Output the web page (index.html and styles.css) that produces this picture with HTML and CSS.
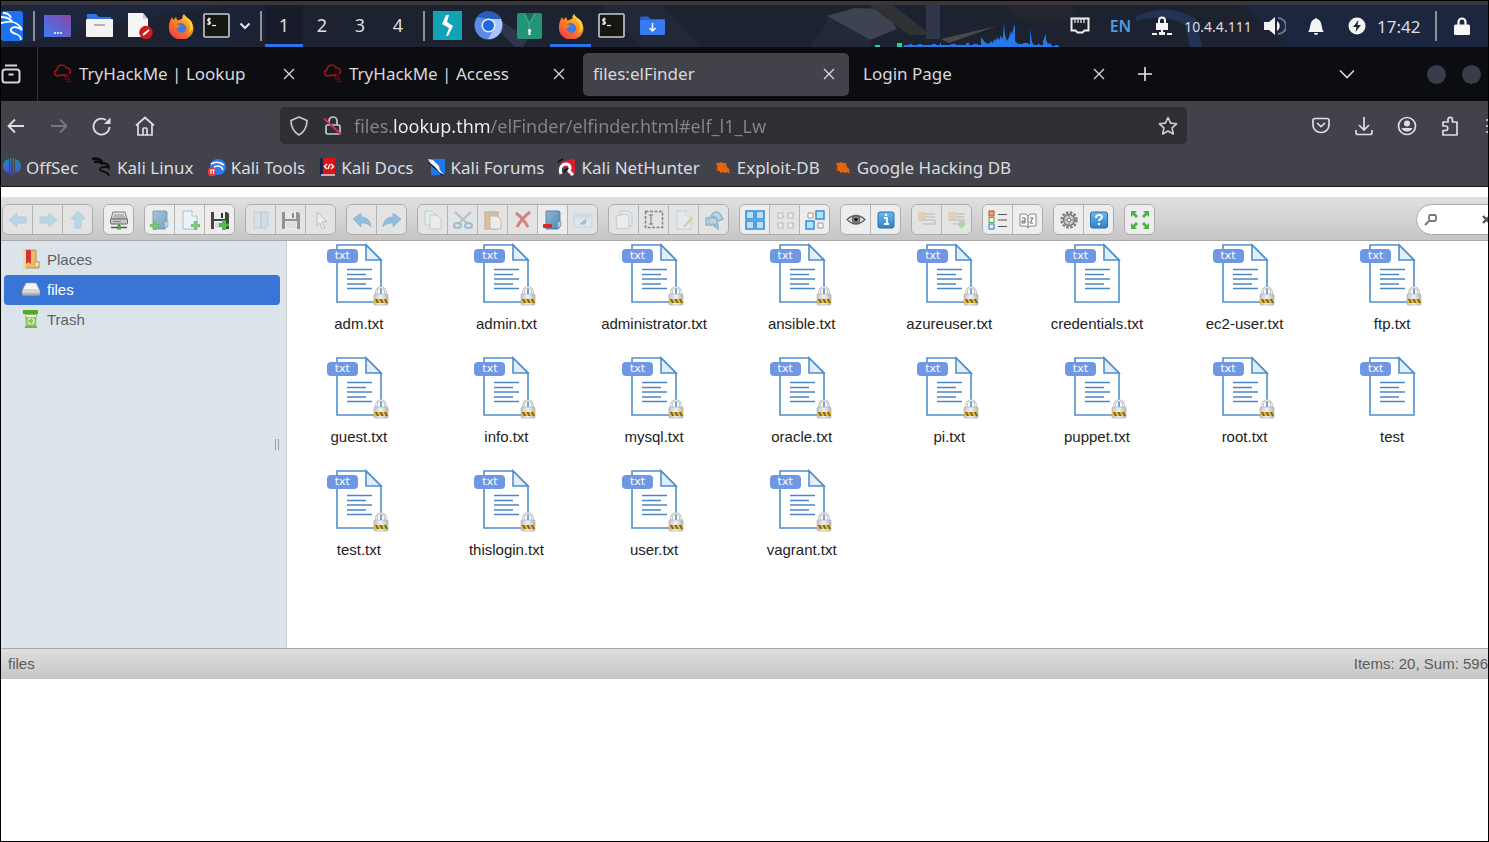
FILE: index.html
```html
<!DOCTYPE html>
<html lang="en">
<head>
<meta charset="utf-8">
<title>files:elFinder</title>
<link rel="stylesheet" href="styles.css">
</head>
<body>
<svg class="sprite" width="0" height="0" aria-hidden="true">
  <defs>
    <linearGradient id="g-purple" x1="0" y1="1" x2="1" y2="0"><stop offset="0" stop-color="#3b7df5"/><stop offset="1" stop-color="#8a45a8"/></linearGradient>
    <linearGradient id="g-fox" x1="0.9" y1="0" x2="0.2" y2="1"><stop offset="0" stop-color="#ffe04a"/><stop offset=".45" stop-color="#ff8a1e"/><stop offset="1" stop-color="#f0364f"/></linearGradient>
    <linearGradient id="g-off" x1="0" y1="0" x2="0" y2="1"><stop offset="0" stop-color="#1795a8"/><stop offset="1" stop-color="#5b3fe0"/></linearGradient>
    <linearGradient id="g-blue" x1="0" y1="0" x2="0" y2="1"><stop offset="0" stop-color="#6db8ee"/><stop offset="1" stop-color="#3180c8"/></linearGradient>
    <linearGradient id="g-folder" x1="0" y1="0" x2="1" y2="1"><stop offset="0" stop-color="#8fb9d6"/><stop offset="1" stop-color="#4f86b0"/></linearGradient>
    <linearGradient id="g-lock" x1="0" y1="0" x2="1" y2="0"><stop offset="0" stop-color="#c4c4c4"/><stop offset=".5" stop-color="#f1f1f1"/><stop offset="1" stop-color="#b5b5b5"/></linearGradient>
    <linearGradient id="g-drive" x1="0" y1="0" x2="0" y2="1"><stop offset="0" stop-color="#f5f5f5"/><stop offset="1" stop-color="#9a9a9a"/></linearGradient>
  </defs>
  <symbol id="firefox" viewBox="0 0 26 26">
    <path fill="url(#g-fox)" d="M16 1c1 3 3 4 5 6 3 3 4.500 6 4.500 9A12 11 0 0 1 1 15C.6 11 2 8 3 6l1-2 1.500 3L8 4l1.500 3.500C11.500 7 13 6 14.500 5.500 14 4 15 2 16 1z"/>
    <path fill="#3f7be0" d="M8 12c2-3 9-3 10 2s-4 7-7 5-4-4-3-7z"/><path fill="#ff7526" d="M6 11c3 0 6 1 7 2-2 1-4 1-4 3-3-1-4-3-3-5z"/><path fill="#ffd23e" d="M16 1c0 4 5 7 6 11 1 3-1 7-3 9 6-3 7-9 4-13-2-3-5-3-7-7z"/>
  </symbol>
  <symbol id="terminal" viewBox="0 0 27 25"><rect x="1" y="1" width="25" height="23" rx="1" fill="#151713" stroke="#c7c9cc" stroke-width="1.600"/><path d="M8 6H5.500c-1 0-1 2 0 2.200l1 .3c1.200.4 1.200 2.300 0 2.500H4M6 4.500V12" fill="none" stroke="#fff" stroke-width="1.100"/><path d="M9 12.500h4" stroke="#fff" stroke-width="1.200"/></symbol>
  <symbol id="folder-plus" viewBox="0 0 20 20"><path d="M3 1h13l1 1v15l-2 2H3z" fill="url(#g-folder)" stroke="#41749c" stroke-width=".8"/><path d="M14.500 18.500v-7H18v4.500z" fill="#a9c9e0" stroke="#5a8bb0" stroke-width=".6"/></symbol>
  <symbol id="plus" viewBox="0 0 8 8"><path d="M3 0h2v3h3v2H5v3H3V5H0V3h3z" fill="#56c646" stroke="#2f9634" stroke-width=".6"/></symbol>
  <symbol id="floppy" viewBox="0 0 20 20"><path d="M1 2h16l2 2v15H1z" fill="#444"/><path d="M4 2h11v7H4z" fill="#eee"/><path d="M11 3h2v5h-2z" fill="#333"/><path d="M4 11h12v8H4z" fill="#f4f4f4"/><path d="M5 13h10M5 15h10M5 17h10" stroke="#aaa" stroke-width=".7"/></symbol>
  <symbol id="page" viewBox="0 0 20 20"><path d="M3 1h9l5 5v13H3z" fill="#e8f4f9" stroke="#87b3c8" stroke-width="1"/><path d="M12 1v5h5" fill="#fff" stroke="#87b3c8" stroke-width=".8"/></symbol>
  <symbol id="arrow" viewBox="0 0 20 20"><path d="M1 10l8-7v4h9v6H9v4z" fill="#68bde8" stroke="#55a4d0" stroke-width="1"/></symbol>
  <symbol id="curve" viewBox="0 0 20 20"><path d="M1 9l8-6v4c6 0 10 4 10 10-2-3-5-4-10-4v4z" fill="#429ad8" stroke="#2f7eb8" stroke-width=".7"/></symbol>
  <symbol id="cross" viewBox="0 0 16 16"><path d="M3 3l10 10M13 3L3 13" stroke="currentColor" stroke-width="1.300" fill="none"/></symbol>
  <symbol id="cloud" viewBox="0 0 20 20"><path d="M5 12C1 12 0 7 4 6c0-5 8-7 9-2 4-1 6 4 3 6M5 12l4-1h5" fill="none" stroke="#b3131d" stroke-width="1.300"/><path d="M11 12.500h6M12 15h5M14 17.500h4" stroke="#7d0c14" stroke-width="1.400" stroke-dasharray="2 1"/></symbol>
  <symbol id="bug" viewBox="0 0 18 18"><path d="M2 5l3 0 2-1 2 1 3 0 1 4 3 3-1 1 1 3-3-2-2 1-2-1-3 1 0-2-4 0 2-1-2-2 2-1-2-3z" fill="#e8640c"/></symbol>
  <symbol id="txt" viewBox="0 0 64 64">
    <path d="M10 2h29l15 15v42H10z" fill="#fff" stroke="#4f8fcb" stroke-width="1.600"/><path d="M39 2v15h15z" fill="#e2eefb" stroke="#4f8fcb" stroke-width="1.600"/>
    <path d="M20 26.500h25M20 31.500h19M20 36h25M20 41h19M20 45.500h25" stroke="#4b87c5" stroke-width="1.500"/>
  </symbol>
  <symbol id="padlock" viewBox="0 0 16 20"><path d="M3.500 9V6a4.500 4.500 0 0 1 9 0v3" fill="none" stroke="#bdbdbd" stroke-width="2.600"/><path d="M3.500 9V6a4.500 4.500 0 0 1 9 0v3" fill="none" stroke="#f0f0f0" stroke-width="1"/><rect x="1" y="8" width="14" height="11" rx="1" fill="url(#g-lock)" stroke="#aaa" stroke-width=".6"/><path d="M1 13h14v4H1z" fill="#e9bd2c"/><path d="M2 13l2 4h2l-2-4zM6.500 13l2 4h2l-2-4zM11 13l2 4h2l-2-4z" fill="#70603a"/></symbol>
  <symbol id="gridsel" viewBox="0 0 20 20"><path d="M1 1h8v8H1zM11 1h8v8h-8zM1 11h8v8H1zM11 11h8v8h-8z" fill="#b9e0fb" stroke="#2f8fdf" stroke-width="1.600"/></symbol>
</svg>

<div class="desktop">
  <header class="panel">
    <svg class="wallpaper" viewBox="0 0 1487 42" preserveAspectRatio="xMidYMid slice" aria-hidden="true">
      <path d="M0 42L130 15 230 0H0z" fill="#1c2742"/><path d="M230 0l-60 42h50L300 0z" fill="#1b243c"/><path d="M495 12l32 22-5 8h-8l-34-34z" fill="#333d50"/><path d="M600 0h60l40 42h-60z" fill="#232a3a"/>
      <path d="M826 11l27-8 30 1 13 20-27 11z" fill="#454c59"/><path d="M826 11l43 24v7h-60l15-20z" fill="#242c3b"/><path d="M868 0l40 30h22L892 0z" fill="#343537"/><path d="M925 0h14v34h-14z" fill="#333c50"/><path d="M940 34l56-13-48 17z" fill="#55534f"/><path d="M1135 12q30-16 60 2l6 28h-12l-5-22q-20-12-49-4z" fill="#24395a"/><path d="M1240 0h250v42h-200z" fill="#1c2843"/><path d="M1000 0l20 15 60 2-10-17z" fill="#25282f"/>
    </svg>
    <button class="launcher edge" aria-label="Applications"><svg width="24" height="30" viewBox="0 0 24 30"><rect width="22" height="30" rx="3" fill="#1c73f2"/><path d="M0 6c5 0 8 1 11 4M2 2c4 0 7 2 8 5M0 12c5-1 8-2 12-1 6 2 8 5 9 8-3-3-9-4-11-1-1 3 2 4 5 5s5 3 5 6" fill="none" stroke="#fff" stroke-width="1.800"/></svg></button>
    <span class="rule"></span>
    <button class="cell" aria-label="Desktop"><svg width="27" height="22" viewBox="0 0 27 22"><rect width="27" height="22" rx="1" fill="url(#g-purple)"/><path d="M10 18h8" stroke="#fff" stroke-width="1.500" stroke-dasharray="2 1"/></svg></button>
    <button class="cell" aria-label="File manager"><svg width="28" height="25" viewBox="0 0 28 25"><path d="M2 1h9l3 3h12v7H2z" fill="#2f72e3"/><rect x="1" y="6" width="27" height="18" rx="1" fill="#f4f3f2"/><path d="M9 12h11" stroke="#b5b3b0" stroke-width="2"/></svg></button>
    <button class="cell" aria-label="Text editor"><svg width="26" height="28" viewBox="0 0 26 28"><path d="M1 1h15l5 6v18H1z" fill="#f4f4f4"/><path d="M16 1v6h5z" fill="#c9c9c9"/><circle cx="19" cy="20.500" r="6.800" fill="#cb1c20"/><path d="M16 23l6-5" stroke="#fff" stroke-width="2"/></svg></button>
    <button class="cell" aria-label="Firefox"><svg width="26" height="26"><use href="#firefox"/></svg></button>
    <button class="cell slim" aria-label="Terminal"><svg width="27" height="25"><use href="#terminal"/></svg></button>
    <button class="chev" aria-label="More terminals"><svg width="12" height="8" viewBox="0 0 12 8"><path d="M1.500 1.500L6 6l4.500-4.500" fill="none" stroke="#e4e6ea" stroke-width="2"/></svg></button>
    <span class="rule"></span>
    <nav class="spaces" aria-label="Workspaces"><button class="space on">1</button><button class="space">2</button><button class="space">3</button><button class="space">4</button></nav>
    <span class="rule"></span>
    <button class="cell" aria-label="Burp Suite"><svg width="29" height="29" viewBox="0 0 29 29"><rect width="29" height="29" fill="#10a3b5"/><path d="M13 4h3l-2 7 6 4-5 10h-2l3-8-7-4z" fill="#fff"/></svg></button>
    <button class="cell" aria-label="Chromium"><svg width="29" height="29" viewBox="0 0 29 29"><circle cx="14.500" cy="14.500" r="14" fill="#5b8be8"/><path d="M14.500 8H27a14 14 0 0 1-13 20l6-10z" fill="#a9c7fa"/><path d="M3 6a14 14 0 0 1 24 2H14.500z" fill="#2a5db4"/><circle cx="14.500" cy="14.500" r="7" fill="#eaf1fd"/><circle cx="14.500" cy="14.500" r="5.500" fill="#1f69df"/></svg></button>
    <button class="cell" aria-label="Archive"><svg width="25" height="26" viewBox="0 0 25 26"><rect width="25" height="26" rx="2" fill="#229577"/><path d="M8 0l4.500 9L17 0z" fill="#15735b"/><path d="M7 1l5 9v5M18 1l-5 9" fill="none" stroke="#5cb59c" stroke-width=".8"/><path d="M12.500 16v6" stroke="#fff" stroke-width="2"/><path d="M10.500 18.500h4l-2-3z" fill="#fff"/></svg></button>
    <button class="cell on" aria-label="Firefox window"><svg width="26" height="26"><use href="#firefox"/></svg></button>
    <button class="cell" aria-label="Terminal window"><svg width="27" height="25"><use href="#terminal"/></svg></button>
    <button class="cell" aria-label="Downloads folder"><svg width="25" height="20" viewBox="0 0 25 20"><path d="M0 2q0-1.500 1.500-1.500H8L11 3h14v5H0z" fill="#2860cf"/><rect y="4" width="25" height="15" rx="1.500" fill="#387bf0"/><path d="M12.500 7v8M9.500 12l3 3 3-3" fill="none" stroke="#fff" stroke-width="1.500"/></svg></button>
    <svg class="graph" width="184" height="32" viewBox="0 0 184 32" aria-hidden="true"><path d="M0 30h5v2H0zM22 28h5v4h-5z" fill="#18d6a0"/><path d="M29 32v-2h5v-1h3v1h6v-1h4v1h10v-1h4v1h4v-2h1v2h10v-1h5v1h10v-2h3v2h4v-1h5v1h3V22l3 4 2 2 3 1 2-3 2 2 1-4 2 2 1-4 2 3 2-5 1 4 1-2 1-14 1 12 2 6 2-4 2-6 1 3 2-8 1-1v16l3 3h5v-1h5v1h2V14l2 13 2 3h4v-2l2 2h3v-4l2-5 1-2v6l2 4 2-1 2 3h3v-1h3v1h8v2z" fill="#2778e8"/></svg>
    <button class="cell" aria-label="Wired network"><svg width="20" height="17" viewBox="0 0 20 17"><path d="M1.500 1.500h17v12h-4l-2 2h-5l-2-2h-4z" fill="none" stroke="#ededed" stroke-width="2"/><path d="M5 2v4M8 2v4M11 2v4M14 2v4" stroke="#ededed" stroke-width="1.200"/></svg></button>
    <button class="cell lang">EN</button>
    <button class="cell" aria-label="VPN"><svg width="20" height="20" viewBox="0 0 20 20"><path d="M7 8V4.500a3 3 0 0 1 6 0V8" fill="none" stroke="#f4f4f4" stroke-width="2"/><path d="M4 7h12v7H4zM9 14h2v3H9zM7 16h6v3H7zM0 17h5v2H0zM15 17h5v2h-5z" fill="#f4f4f4"/></svg></button>
    <span class="ip">10.4.4.111</span>
    <button class="cell" aria-label="Volume"><svg width="22" height="20" viewBox="0 0 22 20"><path d="M0 6h5l6-5v18l-6-5H0z" fill="#f4f4f4"/><path d="M13 5a6 6 0 0 1 0 10z" fill="#f4f4f4"/><path d="M14 2a8 8 0 0 1 0 16" fill="none" stroke="#6f7580" stroke-width="2"/></svg></button>
    <button class="cell" aria-label="Notifications"><svg width="18" height="18" viewBox="0 0 18 18"><path d="M1 15c3-2 1-12 7-13a1 1 0 0 1 2 0c6 1 4 11 7 13zM7 16h4a2 2 0 0 1-4 0z" fill="#f4f4f4"/></svg></button>
    <button class="cell" aria-label="Power"><svg width="18" height="18" viewBox="0 0 18 18"><circle cx="9" cy="9" r="8.500" fill="#f4f4f4"/><path d="M10.500 3L5 10h3.500l-1 5L13 8H9.500z" fill="#1e2536"/></svg></button>
    <time class="clock">17:42</time>
    <span class="rule"></span>
    <button class="cell" aria-label="Lock screen"><svg width="16" height="18" viewBox="0 0 16 18"><path d="M4.500 8V5a3.500 3.500 0 0 1 7 0v3" fill="none" stroke="#f7f7f7" stroke-width="2.200"/><rect y="7.500" width="16" height="10.500" rx="1.500" fill="#f7f7f7"/></svg></button>
  </header>

  <div class="tabstrip">
    <button class="recent" aria-label="View tabs"><svg width="20" height="20" viewBox="0 0 20 20" fill="none" stroke="#d6d6da" stroke-width="2"><path d="M4 1.500h12"/><rect x="1.500" y="5.500" width="17" height="13" rx="2.500"/><path d="M7.500 10.500h5"/></svg></button>
    <div class="tabs">
      <div class="tab"><svg class="fav" width="20" height="20"><use href="#cloud"/></svg><span class="title">TryHackMe | Lookup</span><button class="close" aria-label="Close tab"><svg width="16" height="16"><use href="#cross"/></svg></button></div>
      <div class="tab"><svg class="fav" width="20" height="20"><use href="#cloud"/></svg><span class="title">TryHackMe | Access</span><button class="close" aria-label="Close tab"><svg width="16" height="16"><use href="#cross"/></svg></button></div>
      <div class="tab active"><span class="title">files:elFinder</span><button class="close" aria-label="Close tab"><svg width="16" height="16"><use href="#cross"/></svg></button></div>
      <div class="tab"><span class="title">Login Page</span><button class="close" aria-label="Close tab"><svg width="16" height="16"><use href="#cross"/></svg></button></div>
    </div>
    <button class="newtab" aria-label="New tab"><svg width="16" height="16" viewBox="0 0 16 16"><path d="M8 1v14M1 8h14" stroke="#e6e6ea" stroke-width="1.600"/></svg></button>
    <button class="alltabs" aria-label="List all tabs"><svg width="16" height="10" viewBox="0 0 16 10"><path d="M1 1.500l7 7 7-7" fill="none" stroke="#d6d6da" stroke-width="1.600"/></svg></button>
    <button class="dot" aria-label="Minimize"></button><button class="dot" aria-label="Maximize"></button>
  </div>

  <div class="navbar">
    <button class="nav" aria-label="Back"><svg width="18" height="16" viewBox="0 0 18 16" fill="none" stroke="#dedee2" stroke-width="1.800"><path d="M17 8H1.500M8 1.500L1.500 8 8 14.500"/></svg></button>
    <button class="nav" aria-label="Forward"><svg width="18" height="16" viewBox="0 0 18 16" fill="none" stroke="#77787d" stroke-width="1.800"><path d="M1 8h15.500M10 1.500L16.500 8 10 14.500"/></svg></button>
    <button class="nav" aria-label="Reload"><svg width="20" height="20" viewBox="0 0 20 20"><path d="M17.500 11A8 8 0 1 1 14 4" fill="none" stroke="#dedee2" stroke-width="1.800"/><path d="M18.500 1.500v6.500h-6.500z" fill="#dedee2"/></svg></button>
    <button class="nav" aria-label="Home"><svg width="20" height="20" viewBox="0 0 20 20" fill="none" stroke="#dedee2" stroke-width="1.700"><path d="M1 9.500L10 1.500l9 8M3 8v11h14V8M8 19v-6q0-1 1-1h2q1 0 1 1v6"/></svg></button>
    <div class="urlbar">
      <svg width="20" height="20" viewBox="0 0 20 20" fill="none" stroke="#c9c9cd" stroke-width="1.700"><path d="M10 1l8 3.500c0 7-2 11-8 14.500C4 15.500 2 11.500 2 4.500z" stroke-linejoin="round"/></svg>
      <svg class="insecure" width="20" height="20" viewBox="0 0 20 20" fill="none" stroke="#c9c9cd" stroke-width="1.700"><path d="M6 9V5a4 4 0 0 1 8 0v4"/><rect x="3" y="9" width="14" height="9" rx="1.500"/><path d="M1 2.500l17 16" stroke="#d92a5c" stroke-width="1.900"/></svg>
      <input class="url" aria-label="Address" value="files.lookup.thm/elFinder/elfinder.html#elf_l1_Lw" spellcheck="false">
      <button class="star" aria-label="Bookmark"><svg width="20" height="20" viewBox="0 0 20 20"><path d="M10 1.500l2.600 5.600 6 .7-4.500 4.100 1.200 6.100L10 15l-5.300 3 1.200-6.100L1.400 7.800l6-.7z" fill="none" stroke="#cfcfd3" stroke-width="1.600" stroke-linejoin="round"/></svg></button>
    </div>
    <div class="tools">
      <button class="nav" aria-label="Pocket"><svg width="18" height="17" viewBox="0 0 18 17" fill="none" stroke="#dedee2" stroke-width="1.700"><path d="M3 1.500h12q2 0 2 2V8A8 7.500 0 0 1 1 8V3.500q0-2 2-2zM5 6l4 3.700L13 6"/></svg></button>
      <button class="nav" aria-label="Downloads"><svg width="18" height="20" viewBox="0 0 18 20" fill="none" stroke="#dedee2" stroke-width="1.700"><path d="M9 1v13M4 9l5 5 5-5M1 14v2.500q0 2 2 2h12q2 0 2-2V14"/></svg></button>
      <button class="nav" aria-label="Account"><svg width="20" height="20" viewBox="0 0 20 20"><circle cx="10" cy="10" r="8.500" fill="none" stroke="#dedee2" stroke-width="1.700"/><circle cx="10" cy="7.500" r="3" fill="#dedee2"/><path d="M4.500 12h11a5.800 5 0 0 1-11 0z" fill="#dedee2"/></svg></button>
      <button class="nav" aria-label="Extensions"><svg width="18" height="20" viewBox="0 0 18 20"><path d="M7 6V3.500a2.200 2.200 0 0 1 4.400 0V6H16v13H2v-4.500h2.500a2 2 0 0 0 0-4.500H2V6z" fill="none" stroke="#dedee2" stroke-width="1.700" stroke-linejoin="round"/></svg></button>
      <button class="menu" aria-label="Menu"><svg width="20" height="16" viewBox="0 0 20 16"><path d="M0 2h20M0 8h20M0 14h20" stroke="#dedee2" stroke-width="1.600"/></svg></button>
    </div>
  </div>

  <nav class="bookmarks">
    <a href="#"><svg width="18" height="18" viewBox="0 0 18 18"><path d="M6 1C2 2 0 5 0 8.500S2 14 6 15zM8.200 0H7v16l1.200 1.500zM9.800 0H11v16l-1.200 1.500zM12 1c4 1 6 4 6 7.500S16 14 12 15z" fill="url(#g-off)"/></svg>OffSec</a>
    <a href="#"><svg width="20" height="20" viewBox="0 0 20 20"><path d="M0 2c5-1 8 0 10 3M2 5c4-1 6 0 9 2" fill="none" stroke="#0b0b0d" stroke-width="2.600"/><path d="M9 6c6 0 8 2 8 5-4-2-9-1-9 1.500s8 1 9 6.500" fill="none" stroke="#0b0b0d" stroke-width="1.800"/></svg>Kali Linux</a>
    <a href="#"><svg width="18" height="18" viewBox="0 0 18 18"><circle cx="10" cy="9" r="8" fill="#2c7cf0"/><path d="M3 6c5-3 9-2 13 1M6 9c4-2 8-1 9 3" fill="none" stroke="#fff" stroke-width="1.600"/><rect y="10" width="8" height="8" rx="2" fill="#e23b3b"/><path d="M2 12h5M3 12v4M5.500 12v4" stroke="#fff" fill="none"/></svg>Kali Tools</a>
    <a href="#"><svg width="17" height="18" viewBox="0 0 17 18"><rect width="15" height="17" x="1" fill="#d8151b"/><path d="M1 0h3v17H1z" fill="#1a2142"/><path d="M2 17h14" stroke="#ddd" stroke-width="1.500"/><path d="M8 6L5.500 8.500 8 11M12 6l2.500 2.500L12 11M11 6l-2 5" fill="none" stroke="#fff" stroke-width="1.400"/></svg>Kali Docs</a>
    <a href="#"><svg width="18" height="18" viewBox="0 0 18 18"><path d="M3 1h14v15q-7 2-14 1z" fill="#1f79ee"/><path d="M1 4l14 13" stroke="#111" stroke-width="2"/><path d="M0 1l5 1 6 6 1 4 4 5-5-3-4-5-5-4z" fill="#f4f4f4"/></svg>Kali Forums</a>
    <a href="#"><svg width="18" height="18" viewBox="0 0 18 18"><path d="M3 4L14 1l3 1v13l-5 2z" fill="#d92030"/><path d="M3 16C1 10 4 6 8 6s5 4 3 7l4 4" fill="none" stroke="#fff" stroke-width="3"/><path d="M0 4l5-3M6 14l4-4" stroke="#141414" stroke-width="2"/></svg>Kali NetHunter</a>
    <a href="#"><svg width="18" height="18"><use href="#bug"/></svg>Exploit-DB</a>
    <a href="#"><svg width="18" height="18"><use href="#bug"/></svg>Google Hacking DB</a>
  </nav>

  <main class="finder">
    <div class="toolbar">
      <div class="group">
        <button disabled aria-label="Back"><svg viewBox="0 0 20 20"><use href="#arrow"/></svg></button>
        <button disabled aria-label="Forward"><svg viewBox="0 0 20 20"><use href="#arrow" transform="rotate(180 10 10)"/></svg></button>
        <button disabled aria-label="Up"><svg viewBox="0 0 20 20"><use href="#arrow" transform="rotate(90 10 10)"/></svg></button>
      </div>
      <div class="group">
        <button aria-label="Mount volume"><svg viewBox="0 0 20 20"><path d="M4 2h12l2 7H2z" fill="#e5e5e5" stroke="#777"/><rect x="1.500" y="9" width="17" height="5" rx="1" fill="#c6c6c6" stroke="#666"/><path d="M5 5h10M4 7h12M4 11.500h8" stroke="#888"/><path d="M10 14v3M2 17.500h16" stroke="#555" stroke-width="1.400"/><path d="M8 15.500h4v4H8z" fill="#3faf3c"/></svg></button>
      </div>
      <div class="group">
        <button class="dim" aria-label="New folder"><svg viewBox="0 0 20 20"><use href="#folder-plus"/><use href="#plus" x="0" y="11" width="9" height="9"/></svg></button>
        <button class="dim" aria-label="New file"><svg viewBox="0 0 20 20"><use href="#page"/><use href="#plus" x="11" y="11" width="9" height="9"/></svg></button>
        <button aria-label="Upload files"><svg viewBox="0 0 20 20"><use href="#floppy"/><use href="#plus" x="9" y="10" width="10" height="10"/></svg></button>
      </div>
      <div class="group">
        <button disabled aria-label="Open"><svg viewBox="0 0 20 20"><path d="M3 2h7v16H3z" fill="#c5dbea" stroke="#6d9ab8"/><path d="M10 2h7v14l-2 2h-5z" fill="#a8c9de" stroke="#6d9ab8"/></svg></button>
        <button disabled class="dim" aria-label="Download"><svg viewBox="0 0 20 20"><use href="#floppy"/></svg></button>
        <button disabled aria-label="Get file"><svg viewBox="0 0 20 20"><path d="M6 2l10 10h-5l3 6-3 1-2-6-3 3z" fill="#fff" stroke="#777"/></svg></button>
      </div>
      <div class="group">
        <button disabled class="dim" aria-label="Undo"><svg viewBox="0 0 20 20"><use href="#curve"/></svg></button>
        <button disabled class="dim" aria-label="Redo"><svg viewBox="0 0 20 20"><use href="#curve" transform="matrix(-1 0 0 1 20 0)"/></svg></button>
      </div>
      <div class="group">
        <button disabled aria-label="Copy"><svg viewBox="0 0 20 20"><path d="M2 1h7l4 4v10H2z" fill="#edf5fa" stroke="#7ba1b8"/><path d="M7 5h7l4 4v10H7z" fill="#f3f9fc" stroke="#7ba1b8"/></svg></button>
        <button disabled class="dim" aria-label="Cut"><svg viewBox="0 0 20 20"><path d="M2 2l13 12M18 2L5 14" stroke="#8b9ba6" stroke-width="2"/><ellipse cx="4.500" cy="15.500" rx="3.500" ry="2.500" fill="none" stroke="#4a9bd0" stroke-width="2"/><ellipse cx="15.500" cy="15.500" rx="3.500" ry="2.500" fill="none" stroke="#4a9bd0" stroke-width="2"/></svg></button>
        <button disabled class="dim" aria-label="Paste"><svg viewBox="0 0 20 20"><rect x="2" y="2" width="13" height="17" fill="#d79b56" stroke="#a87235"/><path d="M5 1h7v3H5z" fill="#999"/><path d="M7 6h7l4 4v9H7z" fill="#fbf6ec" stroke="#9a8c74"/></svg></button>
        <button disabled class="dim" aria-label="Delete"><svg viewBox="0 0 20 20"><path d="M3 3q7 5 12 14M17 2Q9 8 4 17" fill="none" stroke="#c52424" stroke-width="3"/></svg></button>
        <button aria-label="Empty folder"><svg viewBox="0 0 20 20"><use href="#folder-plus"/><rect x="0" y="14" width="9" height="4" rx="1" fill="#d42a24"/></svg></button>
        <button disabled aria-label="Hide"><svg viewBox="0 0 20 20"><rect x="1" y="4" width="18" height="13" rx="1" fill="#d9edfa" stroke="#8cb9d8"/><path d="M1 5h18v3H1z" fill="#a8cfea"/><path d="M7 14l6-5-1 5z" fill="#2378bd" stroke="#2378bd"/></svg></button>
      </div>
      <div class="group">
        <button disabled aria-label="Duplicate"><svg viewBox="0 0 20 20"><path d="M6 1h9l3 3v12H6z" fill="#dfeef6" stroke="#7ba1b8"/><path d="M2 6l9-2 4 2v12l-12 1z" fill="#f3f9fc" stroke="#7ba1b8"/></svg></button>
        <button disabled class="dim" aria-label="Rename"><svg viewBox="0 0 20 20"><rect x="1.500" y="1.500" width="17" height="16" fill="none" stroke="#222" stroke-width="1.500" stroke-dasharray="3 1.500"/><path d="M5 5h4M5 14h4M7 5v9" stroke="#444" stroke-width="1.300"/></svg></button>
        <button disabled aria-label="Edit"><svg viewBox="0 0 20 20"><use href="#page"/><path d="M10 17l8-9" stroke="#c29c28" stroke-width="2.400"/></svg></button>
        <button disabled class="dim" aria-label="Resize"><svg viewBox="0 0 20 20"><path d="M2 8h11v7H2zM7 6q4-7 9-2l3 5-5 2-3-4zM9 15h5v4z" fill="#9cc8e6" stroke="#3f87b9" stroke-width="1.500"/><path d="M5 6v8h9" fill="none" stroke="#4a84a8"/></svg></button>
      </div>
      <div class="group">
        <button aria-label="Select all"><svg viewBox="0 0 20 20"><use href="#gridsel"/></svg></button>
        <button disabled aria-label="Select none"><svg viewBox="0 0 20 20"><path d="M3 3h5v5H3zM13 3h5v5h-5zM3 13h5v5H3zM13 13h5v5h-5z" fill="#fff" stroke="#777" stroke-width="1.200"/></svg></button>
        <button aria-label="Invert selection"><svg viewBox="0 0 20 20"><path d="M3 3h5v5H3zM13 13h5v5h-5z" fill="#fff" stroke="#999"/><path d="M11 1h8v8h-8zM1 11h8v8H1z" fill="#b9e0fb" stroke="#2f8fdf" stroke-width="1.500"/></svg></button>
      </div>
      <div class="group">
        <button aria-label="Preview"><svg viewBox="0 0 20 20"><path d="M1 9.500q9-8 18 0-9 9-18 0z" fill="#eee" stroke="#666" stroke-width="1.300"/><circle cx="10" cy="9.500" r="4" fill="#888" stroke="#555"/><circle cx="10" cy="9.500" r="1.800" fill="#111"/></svg></button>
        <button aria-label="Info"><svg viewBox="0 0 20 20"><rect x="2" y="2" width="16" height="16" rx="2" fill="url(#g-blue)" stroke="#2c6eaa"/><path d="M8 8h3v6h2M8 14h3" fill="none" stroke="#fff" stroke-width="1.800"/><circle cx="10" cy="5" r="1.300" fill="#fff"/></svg></button>
      </div>
      <div class="group">
        <button disabled aria-label="Extract"><svg viewBox="0 0 20 20"><path d="M1 2h8v8H1z" fill="#e0ab68"/><path d="M9 4h9M9 7h9M2 10h16v4H6" fill="none" stroke="#a08c76" stroke-width="1.600"/></svg></button>
        <button disabled aria-label="Archive"><svg viewBox="0 0 20 20"><path d="M1 2h8v8H1z" fill="#e0ab68"/><path d="M9 4h9M9 7h8M2 10h15v4H6" fill="none" stroke="#a08c76" stroke-width="1.600"/><path d="M12 11h5v3h2l-4.500 5L10 14h2z" fill="#42b942"/></svg></button>
      </div>
      <div class="group">
        <button aria-label="View"><svg viewBox="0 0 20 20"><rect x="1" y="1" width="5" height="5" fill="#f4a26a" stroke="#ad5a2a"/><rect x="1" y="7.500" width="5" height="5" fill="#eaf5ea" stroke="#55a35a"/><rect x="1" y="14" width="5" height="5" fill="#e3edf8" stroke="#4770a8"/><path d="M10 4.500h9M10 10h9M10 16.500h9" stroke="#555" stroke-width="1.200"/></svg></button>
        <button aria-label="Sort"><svg viewBox="0 0 20 20"><path d="M2 4h6l2 2 2-2h6v12h-6l-2 2-2-2H2z" fill="#fdfdfd" stroke="#888"/><path d="M4 8h3v5H4v-2h3M12 8h3l-3 5h3M10 6v11" fill="none" stroke="#666"/></svg></button>
      </div>
      <div class="group">
        <button aria-label="Preferences"><svg viewBox="0 0 20 20"><circle cx="10" cy="10" r="7.500" fill="none" stroke="#7d7d7d" stroke-width="2.400" stroke-dasharray="2.500 1.500"/><circle cx="10" cy="10" r="5.500" fill="#ccc" stroke="#777" stroke-width="1.400"/><circle cx="10" cy="10" r="1.800" fill="#fff" stroke="#777"/><path d="M10 5v3M10 12v3M5 10h3M12 10h3" stroke="#888"/></svg></button>
        <button aria-label="Help"><svg viewBox="0 0 20 20"><rect x="1.500" y="2" width="17" height="16" rx="2" fill="url(#g-blue)" stroke="#2c6eaa"/><path d="M7 8c0-4 6-4 6-1 0 2-3 2-3 4" fill="none" stroke="#fff" stroke-width="1.900"/><circle cx="10" cy="14" r="1.200" fill="#fff"/></svg></button>
      </div>
      <div class="group">
        <button aria-label="Full screen"><svg viewBox="0 0 20 20"><path d="M1 1h6L5 3l3 3-2 2-3-3-2 2zM19 1v6l-2-2-3 3-2-2 3-3-2-2zM1 19v-6l2 2 3-3 2 2-3 3 2 2zM19 19h-6l2-2-3-3 2-2 3 3 2-2z" fill="#4fae46"/></svg></button>
      </div>
      <label class="search"><svg width="14" height="14" viewBox="0 0 14 14"><rect x="5" y="2" width="7" height="6" rx="1.500" fill="none" stroke="#777" stroke-width="1.800"/><path d="M5 8l-4 4" stroke="#777" stroke-width="2"/></svg><input type="text" aria-label="Search files"><svg width="12" height="12" viewBox="0 0 12 12"><path d="M2 2l7 7M9 2L2 9" stroke="#555" stroke-width="2.400"/></svg></label>
    </div>

    <div class="workzone">
      <nav class="tree">
        <a href="#"><svg width="18" height="20" viewBox="0 0 18 20"><path d="M3 1h11v12h3v6H3z" fill="#e9bd6d" stroke="#b88536" stroke-width=".8"/><path d="M1 2l3-1v18H1z" fill="#f4d899"/><path d="M4 1h5v14l-2.500-2L4 15z" fill="#cf3434"/><path d="M13 19v-6h4v4z" fill="#fbe5b5" stroke="#b88536" stroke-width=".6"/></svg>Places</a>
        <a href="#" class="sel"><svg width="18" height="20" viewBox="0 0 18 20"><path d="M4 4h10l4 8H0z" fill="#f6f6f6" stroke="#aaa" stroke-width=".6"/><rect y="11" width="18" height="5.500" rx="1.500" fill="url(#g-drive)" stroke="#999" stroke-width=".6"/></svg>files</a>
        <a href="#"><svg width="18" height="20" viewBox="0 0 18 20"><path d="M3 4h12l-1 14H4z" fill="#8fc265"/><path d="M1 1h15v4H1z" fill="#56a829"/><path d="M4 6h10v2H4z" fill="#e5f3da"/><path d="M3 17h12v2H3z" fill="#76b14a"/><circle cx="9" cy="12" r="3" fill="none" stroke="#d8efc5" stroke-width="1.500" stroke-dasharray="4 1"/></svg>Trash</a>
        <span class="grip"></span>
      </nav>
      <ul class="files">
        <li><span class="icon"><svg><use href="#txt"/></svg><span class="tag">txt</span><svg class="lock"><use href="#padlock"/></svg></span>adm.txt</li>
        <li><span class="icon"><svg><use href="#txt"/></svg><span class="tag">txt</span><svg class="lock"><use href="#padlock"/></svg></span>admin.txt</li>
        <li><span class="icon"><svg><use href="#txt"/></svg><span class="tag">txt</span><svg class="lock"><use href="#padlock"/></svg></span>administrator.txt</li>
        <li><span class="icon"><svg><use href="#txt"/></svg><span class="tag">txt</span><svg class="lock"><use href="#padlock"/></svg></span>ansible.txt</li>
        <li><span class="icon"><svg><use href="#txt"/></svg><span class="tag">txt</span><svg class="lock"><use href="#padlock"/></svg></span>azureuser.txt</li>
        <li><span class="icon"><svg><use href="#txt"/></svg><span class="tag">txt</span></span>credentials.txt</li>
        <li><span class="icon"><svg><use href="#txt"/></svg><span class="tag">txt</span><svg class="lock"><use href="#padlock"/></svg></span>ec2-user.txt</li>
        <li><span class="icon"><svg><use href="#txt"/></svg><span class="tag">txt</span><svg class="lock"><use href="#padlock"/></svg></span>ftp.txt</li>
        <li><span class="icon"><svg><use href="#txt"/></svg><span class="tag">txt</span><svg class="lock"><use href="#padlock"/></svg></span>guest.txt</li>
        <li><span class="icon"><svg><use href="#txt"/></svg><span class="tag">txt</span><svg class="lock"><use href="#padlock"/></svg></span>info.txt</li>
        <li><span class="icon"><svg><use href="#txt"/></svg><span class="tag">txt</span><svg class="lock"><use href="#padlock"/></svg></span>mysql.txt</li>
        <li><span class="icon"><svg><use href="#txt"/></svg><span class="tag">txt</span><svg class="lock"><use href="#padlock"/></svg></span>oracle.txt</li>
        <li><span class="icon"><svg><use href="#txt"/></svg><span class="tag">txt</span><svg class="lock"><use href="#padlock"/></svg></span>pi.txt</li>
        <li><span class="icon"><svg><use href="#txt"/></svg><span class="tag">txt</span><svg class="lock"><use href="#padlock"/></svg></span>puppet.txt</li>
        <li><span class="icon"><svg><use href="#txt"/></svg><span class="tag">txt</span><svg class="lock"><use href="#padlock"/></svg></span>root.txt</li>
        <li><span class="icon"><svg><use href="#txt"/></svg><span class="tag">txt</span></span>test</li>
        <li><span class="icon"><svg><use href="#txt"/></svg><span class="tag">txt</span><svg class="lock"><use href="#padlock"/></svg></span>test.txt</li>
        <li><span class="icon"><svg><use href="#txt"/></svg><span class="tag">txt</span><svg class="lock"><use href="#padlock"/></svg></span>thislogin.txt</li>
        <li><span class="icon"><svg><use href="#txt"/></svg><span class="tag">txt</span><svg class="lock"><use href="#padlock"/></svg></span>user.txt</li>
        <li><span class="icon"><svg><use href="#txt"/></svg><span class="tag">txt</span><svg class="lock"><use href="#padlock"/></svg></span>vagrant.txt</li>
      </ul>
    </div>
    <footer class="statusbar"><span>files</span><span>Items: 20, Sum: 596</span></footer>
  </main>
</div>
</body>
</html>
```
FILE: styles.css
```css
* { box-sizing: border-box; }
body { margin: 0; background: #fff; font-family: "Noto Sans", sans-serif; }
button { margin: 0; padding: 0; border: 0; background: none; font: inherit; color: inherit; display: flex; align-items: center; justify-content: center; flex: none; }
svg { flex: none; display: block; }
.sprite { position: absolute; }
.desktop { min-height: 100vh; border: 1px solid #000; overflow: hidden; background: #fff; }

.panel { position: relative; display: flex; align-items: center; height: 46px; border-top: 4px solid #3a3639; background: #1d2231; color: #dcdfe4; overflow: hidden; }
.panel > * { position: relative; }
.panel .wallpaper { position: absolute; inset: 0; width: 100%; height: 100%; opacity: .8; }
.edge { width: 31px; justify-content: flex-start; }
.rule { flex: none; width: 2px; height: 30px; margin: 0 2px 0 1px; background: #8d9097; }
.cell { width: 41px; height: 42px; border-bottom: 3px solid transparent; border-top: 2px solid transparent; }
.cell.on, .space.on { border-bottom-color: #2c73ea; }
.slim { width: 30px; }
.chev { width: 28px; height: 42px; }
.spaces { display: flex; padding: 0 5px 0 1px; }
.space { width: 38px; height: 42px; border-bottom: 3px solid transparent; font-size: 18px; }
.space.on { background: #181c2a; }
.graph { margin-left: auto; align-self: flex-end; }
.lang { font-size: 16px; font-weight: 600; color: #4a9ee0; }
.ip { width: 72px; font-size: 14px; text-align: center; }
.clock { width: 57px; font-size: 17px; }
.panel .cell:last-child { margin: 0 6px 0 2px; }

.tabstrip { display: flex; align-items: center; height: 54px; background: #0c0d11; color: #d9d9dd; font-size: 17px; }
.recent { width: 37px; height: 54px; justify-content: flex-start; border-right: 1px solid #34353b; }
.tabs { display: flex; flex: 0 1 1081px; gap: 4px; padding-left: 5px; min-width: 0; }
.tab { display: flex; align-items: center; flex: 1 1 0; min-width: 0; height: 43px; padding: 0 10px 1px; border-radius: 5px; }
.tab.active { background: #42434a; }
.fav { margin-right: 6px; }
.title { flex: 1; white-space: nowrap; overflow: hidden; }
.close { width: 20px; height: 24px; }
.newtab { width: 44px; height: 44px; margin-left: 4px; }
.alltabs { width: 44px; height: 44px; margin-left: auto; margin-right: 58px; }
.dot { width: 19px; height: 19px; margin-right: 16px; border-radius: 50%; background: #393c4a; }
.dot:last-child { margin-right: 7px; }

.navbar { display: flex; align-items: center; height: 49px; background: #42434a; }
.nav { width: 43px; height: 43px; }
.navbar > .nav:first-child { margin-left: -7px; }
.urlbar { display: flex; align-items: center; flex: 1; min-width: 0; height: 37px; margin: 0 112px 0 114px; padding: 0 9px; border-radius: 5px; background: #2e2f33; }
.insecure { margin: 0 11px 0 14px; }
.url { flex: 1; min-width: 0; height: 37px; padding: 0; border: 0; outline: 0; font: 18px "Noto Sans", sans-serif; color: transparent; background: linear-gradient(90deg, #84858b 40px, #f3f3f5 40px 136px, #84858b 136px); -webkit-background-clip: text; background-clip: text; }
.tools { display: flex; }
.menu { width: 17px; height: 43px; justify-content: flex-start; padding-left: 15px; overflow: hidden; }

.bookmarks { display: flex; align-items: center; gap: 14px; height: 37px; padding: 0 0 2px 2px; border-bottom: 1px solid #141519; background: #42434a; font-size: 17px; }
.bookmarks a { display: flex; align-items: center; gap: 5px; color: #dcdce0; text-decoration: none; white-space: nowrap; }

.finder { padding-top: 10px; font: 15px "Liberation Sans", Arial, sans-serif; }
.toolbar { display: flex; align-items: center; gap: 10px; height: 44px; padding: 2px 0 0 1px; border-bottom: 1px solid #a9a9a9; background: linear-gradient(#e0e0e0, #c6c6c6); overflow: hidden; }
.group { display: flex; flex: none; border: 1px solid #acacac; border-radius: 6px; overflow: hidden; }
.group button { width: 30px; height: 29px; background: #ededed; border-left: 1px solid #b4b4b4; }
.group button:first-child { width: 29px; border-left: 0; }
.group svg { width: 20px; height: 20px; }
.group button.dim svg { opacity: .75; }
.group button:disabled { background: #e3e3e3; }
.group button:disabled svg { opacity: .35; }
.group button.dim:disabled svg { opacity: .5; }
.search { display: flex; align-items: center; flex: none; width: 120px; height: 31px; margin-left: auto; margin-right: -48px; padding-left: 7px; border: 1px solid #aaa; border-radius: 16px; background: #fff; }
.search input { width: 43px; height: 24px; padding: 0; border: 0; outline: 0; }

.workzone { display: flex; min-height: 407px; }
.tree { position: relative; width: 286px; padding: 4px 6px 0 3px; border-right: 1px solid #ccc; background: #dce4eb; flex: none; }
.tree a { display: flex; align-items: center; gap: 7px; height: 30px; padding: 0 0 2px 18px; border-radius: 4px; color: #5e6265; text-decoration: none; }
.tree a.sel { background: #3875d7; color: #fff; }
.grip { position: absolute; right: 7px; top: 198px; width: 4px; height: 11px; border: solid #9a9fa4; border-width: 0 1px; }
.files { flex: 1; display: grid; grid-template-columns: repeat(auto-fill, minmax(140px, 1fr)); grid-auto-rows: 113px; align-content: start; margin: 0 0 0 -2px; padding: 2px 22px 0 0; list-style: none; }
.files li { display: flex; flex-direction: column; align-items: center; gap: 8px; color: #222; line-height: 18px; }
.icon { position: relative; width: 64px; height: 64px; }
.icon svg { width: 64px; height: 64px; }
.icon .lock { position: absolute; right: 2px; bottom: 1px; width: 16px; height: 20px; }
.tag { position: absolute; left: 0; top: 6px; width: 31px; height: 14px; border-radius: 4px; background: #6f97e4; color: #fff; font: 11px/13px "DejaVu Sans", sans-serif; text-align: center; }
.statusbar { display: flex; justify-content: space-between; align-items: center; height: 31px; padding: 0 0 2px 7px; border-top: 1px solid #aaa; background: linear-gradient(#dedede, #c6c6c6); color: #5c5c5c; white-space: nowrap; }
```
